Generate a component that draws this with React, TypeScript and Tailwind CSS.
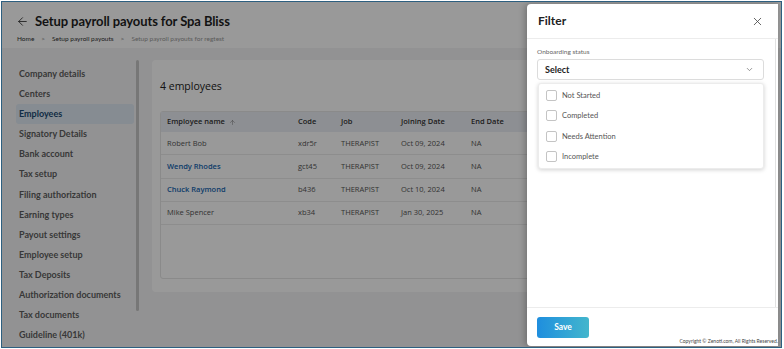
import { ChevronDown, X, ArrowLeft, ArrowUp } from "lucide-react";

const NAV = [
  "Company details",
  "Centers",
  "Employees",
  "Signatory Details",
  "Bank account",
  "Tax setup",
  "Filing authorization",
  "Earning types",
  "Payout settings",
  "Employee setup",
  "Tax Deposits",
  "Authorization documents",
  "Tax documents",
  "Guideline (401k)",
];

const ROWS = [
  { name: "Robert Bob", code: "xdr5r", job: "THERAPIST", join: "Oct 09, 2024", end: "NA", link: false },
  { name: "Wendy Rhodes", code: "gct45", job: "THERAPIST", join: "Oct 09, 2024", end: "NA", link: true },
  { name: "Chuck Raymond", code: "b436", job: "THERAPIST", join: "Oct 10, 2024", end: "NA", link: true },
  { name: "Mike Spencer", code: "xb34", job: "THERAPIST", join: "Jan 30, 2025", end: "NA", link: false },
];

const STATUSES = ["Not Started", "Completed", "Needs Attention", "Incomplete"];

function Page() {
  return (
    <div className="flex h-full flex-col bg-[#f4f4f5]">
      {/* Header */}
      <div className="h-[46px] shrink-0 bg-white pl-[14px] pt-[9px]">
        <div className="flex items-center gap-[6px]">
          <ArrowLeft size={13} strokeWidth={1.6} className="text-[#333]" />
          <h1 className="text-[13px] font-bold leading-[20px] tracking-[-0.1px] text-[#1f1f1f]">
            Setup payroll payouts for Spa Bliss
          </h1>
        </div>
        <div className="mt-[3px] flex items-center gap-[7px] pl-[1px] text-[6.5px] leading-[10px]">
          <span className="text-[#333]">Home</span>
          <span className="text-[#888]">&gt;</span>
          <span className="text-[#333]">Setup payroll payouts</span>
          <span className="text-[#888]">&gt;</span>
          <span className="text-[#999]">Setup payroll payouts for regtest</span>
        </div>
      </div>

      <div className="flex min-h-0 flex-1">
        {/* Sidebar */}
        <div className="relative w-[150px] shrink-0 pt-[16px] pl-[14px]">
          <div className="flex w-[118px] flex-col">
            {NAV.map((n) => (
              <div
                key={n}
                className={
                  n === "Employees"
                    ? "h-[20.1px] rounded-[3px] bg-[#dfe9f3] pl-[3px] text-[9px] font-bold leading-[20px] text-[#1c4a72]"
                    : "h-[20.1px] pl-[3px] text-[9px] font-bold leading-[20px] text-[#5e5e5e]"
                }
              >
                {n}
              </div>
            ))}
          </div>
          <div className="absolute left-[134px] top-[12px] h-[251px] w-[3px] rounded-full bg-[#c6c6c6]" />
        </div>

        {/* Card */}
        <div className="pt-[12px]">
          <div className="h-[232px] w-[400px] rounded-[4px] bg-white pl-[8px] pt-[18px] font-['Open_Sans',sans-serif]">
            <div className="text-[10.5px] font-medium leading-[16px] text-[#222]">4 employees</div>
            <div className="mt-[17px] h-[168px] rounded-[3px] border border-[#e6e6e6]">
              <div className="flex h-[20px] items-center bg-[#eceff5] text-[7.5px] font-semibold text-[#333]">
                <div className="flex w-[137px] items-center gap-[4px] pl-[6px]">
                  Employee name <ArrowUp size={7} strokeWidth={1.5} className="text-[#666]" />
                </div>
                <div className="w-[43px]">Code</div>
                <div className="w-[60px]">Job</div>
                <div className="w-[70px]">Joining Date</div>
                <div>End Date</div>
              </div>
              {ROWS.map((r) => (
                <div
                  key={r.name}
                  className="flex h-[23.3px] items-center border-b border-[#ececec] text-[7.5px] text-[#555]"
                >
                  <div
                    className={
                      r.link
                        ? "w-[137px] pl-[6px] font-semibold text-[#1565b0]"
                        : "w-[137px] pl-[6px]"
                    }
                  >
                    {r.name}
                  </div>
                  <div className="w-[43px]">{r.code}</div>
                  <div className="w-[60px]">{r.job}</div>
                  <div className="w-[70px]">{r.join}</div>
                  <div>{r.end}</div>
                </div>
              ))}
            </div>
          </div>
        </div>
      </div>
    </div>
  );
}

function Drawer() {
  return (
    <div className="absolute right-[3px] top-[2px] bottom-[1px] flex w-[251px] flex-col rounded-tl-[4px] rounded-bl-[4px] bg-white shadow-[-2px_0_6px_rgba(0,0,0,0.25)]">
      <div className="flex h-[35px] shrink-0 items-center justify-between border-b border-[#ececec] pl-[11px] pr-[14px]">
        <span className="text-[12px] font-bold text-[#222]">Filter</span>
        <X size={13} strokeWidth={1.5} className="text-[#444]" />
      </div>
      <div className="relative flex-1 pl-[10px] pr-[14px] pt-[8px]">
        <div className="text-[6.5px] leading-[10px] text-[#666]">Onboarding status</div>
        <div className="mt-[2px] flex h-[21px] items-center justify-between rounded-[3px] border border-[#dcdcdc] pl-[7px] pr-[9px]">
          <span className="text-[9px] font-bold text-[#222]">Select</span>
          <ChevronDown size={9} strokeWidth={1.8} className="text-[#666]" />
        </div>
        <div className="ml-[1px] mt-[3px] flex flex-col rounded-[3px] border border-[#ececec] bg-white py-[1px] shadow-[0_1px_4px_rgba(0,0,0,0.18)]">
          {STATUSES.map((s) => (
            <div key={s} className="flex h-[20.5px] items-center gap-[5px] pl-[7px]">
              <span className="h-[11px] w-[11px] rounded-[2px] border border-[#c4c4c4] bg-white" />
              <span className="text-[7.5px] text-[#555]">{s}</span>
            </div>
          ))}
        </div>
        <div className="absolute right-[2px] top-0 bottom-0 w-[1px] bg-[#e2e2e2]" />
      </div>
      <div className="relative flex h-[39px] shrink-0 items-start border-t border-[#ececec] pl-[10px] pt-[9px]">
        <button className="h-[21px] w-[52px] rounded-[3px] bg-gradient-to-r from-[#1f8ede] to-[#43b6cc] text-[8.5px] font-bold leading-[21px] text-white">
          Save
        </button>
        <span className="absolute bottom-[1px] right-[0px] text-[5px] leading-[7px] text-[#444]">
          Copyright © Zenoti.com, All Rights Reserved.
        </span>
      </div>
    </div>
  );
}

export default function App() {
  return (
    <div className="h-[349px] w-[784px] bg-white p-[1px] font-['Lato',sans-serif]">
      <div className="relative h-full w-[781px] overflow-hidden border-[1.5px] border-[#2d5f80]">
        <Page />
        <div className="absolute inset-0 bg-black/40" />
        <Drawer />
      </div>
    </div>
  );
}
